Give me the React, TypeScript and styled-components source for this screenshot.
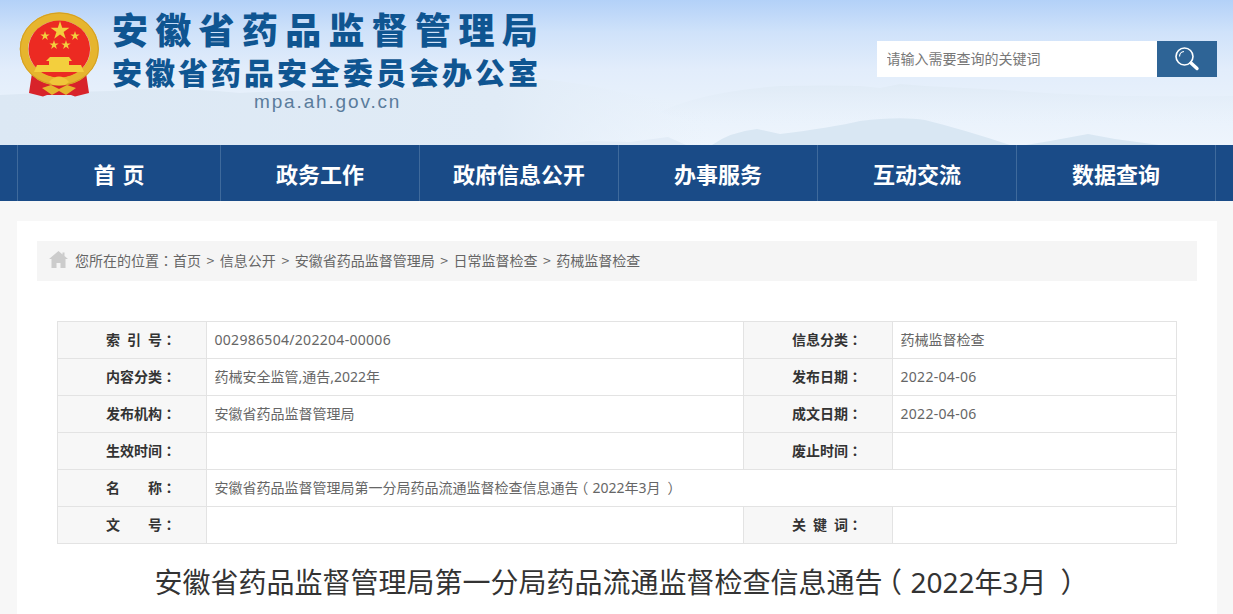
import styled, { createGlobalStyle } from "styled-components";

const GlobalStyle = createGlobalStyle`
  html, body, #root {
    margin: 0;
    padding: 0;
    height: 100%;
    overflow: hidden;
    background: #f7f7f7;
  }
  body {
    font-family: "Noto Sans", "Noto Sans CJK SC", sans-serif;
  }
`;

const Page = styled.div`
  width: 1233px;
  height: 614px;
  overflow: hidden;
`;

const Banner = styled.header`
  position: relative;
  height: 145px;
  overflow: hidden;
  background: linear-gradient(180deg, #b3d1f8 0%, #cfe2fa 22%, #e2edfb 48%, #e8f1fb 72%, #eef5fd 100%);
`;

const Scenery = styled.svg`
  position: absolute;
  left: 0;
  top: 0;
`;

const BannerRow = styled.div`
  position: relative;
  display: flex;
  justify-content: space-between;
  padding: 0 16px 0 18px;
`;

const Brand = styled.div`
  display: flex;
  gap: 13px;
  padding-top: 11px;
`;

const BrandText = styled.div`
  display: flex;
  flex-direction: column;
  margin-top: -2px;
  font-family: "Noto Sans CJK SC", sans-serif;
  font-weight: 900;
  color: #0f5591;
  white-space: nowrap;
`;

const TitleMain = styled.div`
  margin-left: -1px;
  font-size: 36px;
  line-height: 38px;
  letter-spacing: 7.3px;
`;

const TitleSub = styled.div`
  margin: 6px 0 0 -1px;
  font-size: 30px;
  line-height: 36px;
  letter-spacing: 3px;
`;

const Domain = styled.div`
  margin-top: 1px;
  padding-left: 141px;
  font-family: "Liberation Sans", sans-serif;
  font-weight: 400;
  font-size: 19px;
  line-height: 24px;
  letter-spacing: 1.85px;
  color: #5a7c9c;
`;

const Search = styled.form`
  display: flex;
  margin-top: 41px;
  width: 340px;
  height: 36px;
`;

const SearchInput = styled.input`
  flex: 1;
  min-width: 0;
  box-sizing: border-box;
  border: 0;
  outline: 0;
  padding: 0 10px 2px 9.5px;
  background: #fff;
  font: 14px "Noto Sans CJK SC", sans-serif;
  color: #333;
  &::placeholder {
    color: #777;
    opacity: 1;
  }
`;

const SearchButton = styled.button`
  display: flex;
  align-items: center;
  justify-content: center;
  width: 60px;
  border: 0;
  padding: 0;
  background: #2e6496;
`;

const Nav = styled.nav`
  height: 56px;
  background: #1a4b87;
  padding-left: 17px;
  display: flex;
`;

const NavItem = styled.a<{ $first?: boolean }>`
  box-sizing: border-box;
  width: ${(p) => (p.$first ? "203px" : "199px")};
  line-height: 56px;
  text-align: center;
  border-left: 1px solid #3f6a9c;
  color: #fff;
  font-family: "Noto Sans CJK SC", sans-serif;
  font-weight: 700;
  font-size: 22px;
  word-spacing: 2px;
  white-space: pre;
`;

const NavEnd = styled.span`
  width: 1px;
  background: #3f6a9c;
`;

const Card = styled.main`
  margin: 20px 16px 0 17px;
  padding: 20px;
  background: #fff;
`;

const Crumbs = styled.div`
  display: flex;
  align-items: center;
  gap: 7px;
  height: 40px;
  padding: 0 0 3px 12px;
  box-sizing: border-box;
  background: #f5f5f5;
  font: 14px "Noto Sans CJK SC", sans-serif;
  word-spacing: 2.4px;
  color: #666;
  white-space: pre;
`;

// fullwidth punctuation sits centred in its box in the TC cut
const Punct = styled.span`
  font-family: "Noto Sans CJK TC", sans-serif;
`;

// halt squeezes the paren to half an em, the em box then places it
const Paren = styled.span<{ $close?: boolean }>`
  display: inline-block;
  box-sizing: border-box;
  width: 1em;
  padding-left: ${(p) => (p.$close ? "0" : "0.2em")};
  text-align: ${(p) => (p.$close ? "right" : "left")};
  font-family: "Noto Sans CJK TC", sans-serif;
  font-feature-settings: "halt";
`;

const MetaTable = styled.table`
  width: 1120px;
  margin: 40px 0 0 20px;
  border-collapse: collapse;
  table-layout: fixed;
  font-family: "Noto Sans", "Noto Sans CJK SC", sans-serif;
  font-size: 14px;
`;

const Label = styled.th`
  box-sizing: border-box;
  height: 37px;
  padding: 0 0 2px 48px;
  border: 1px solid #e3e3e3;
  background: #f7f7f7;
  color: #333;
  font-weight: 700;
  text-align: left;
  white-space: pre;
`;

const Value = styled.td<{ $code?: boolean }>`
  box-sizing: border-box;
  height: 37px;
  padding: 0 0 2px 7.5px;
  border: 1px solid #e3e3e3;
  color: #666;
  letter-spacing: ${(p) => (p.$code ? "0.3px" : "0")};
  white-space: pre;
`;

const ArticleTitle = styled.h1`
  margin: 17px 5px 0 0;
  text-align: center;
  font-family: "Noto Sans", "Noto Sans CJK SC", sans-serif;
  font-weight: 400;
  font-size: 28px;
  line-height: 40px;
  color: #333;
  white-space: pre;
`;

function Emblem() {
  return (
    <svg width="82" height="86" viewBox="0 0 82 86">
      <path d="M14 62 L11 82 L25 85.5 L29 84 H53 L57 85.5 L71 82 L68 62 Z" fill="#d8232a" />
      <ellipse cx="41.3" cy="38" rx="35.3" ry="32.5" fill="none" stroke="#e6b52e" strokeWidth="8.5" />
      <ellipse cx="41.3" cy="38" rx="39" ry="36" fill="none" stroke="#d49f22" strokeWidth="1" />
      <ellipse cx="41.3" cy="38" rx="30.8" ry="28.5" fill="#ec2a22" />
      <g fill="#f3cf3d">
        <polygon points="42,10 44.2,16.8 51.4,16.8 45.6,21 47.8,27.8 42,23.6 36.2,27.8 38.4,21 32.6,16.8 39.8,16.8" />
        <polygon points="27,20 28.1,23.4 31.7,23.4 28.8,25.5 29.9,28.9 27,26.8 24.1,28.9 25.2,25.5 22.3,23.4 25.9,23.4" />
        <polygon points="57,20 58.1,23.4 61.7,23.4 58.8,25.5 59.9,28.9 57,26.8 54.1,28.9 55.2,25.5 52.3,23.4 55.9,23.4" />
        <polygon points="36,29 37.1,32.4 40.7,32.4 37.8,34.5 38.9,37.9 36,35.8 33.1,37.9 34.2,34.5 31.3,32.4 34.9,32.4" />
        <polygon points="48,29 49.1,32.4 52.7,32.4 49.8,34.5 50.9,37.9 48,35.8 45.1,37.9 46.2,34.5 43.3,32.4 46.9,32.4" />
        <path d="M32 46 H51 L54 50 H51 V54 H63 L66 61 H16 L19 54 H31 V50 H28 Z" />
      </g>
      <path d="M31 71 Q41 60 51 71 L47 74 H35 Z" fill="#f0c63a" />
      <path d="M24 77 L33 74 L41 78 L49 74 L58 77 L48 84 L41 80 L34 84 Z" fill="#e6b52e" />
    </svg>
  );
}

const rows: [string, string, string, string][] = [
  ["索\u2002引\u2002号", "002986504/202204-00006", "信息分类", "药械监督检查"],
  ["内容分类", "药械安全监管,通告,2022年", "发布日期", "2022-04-06"],
  ["发布机构", "安徽省药品监督管理局", "成文日期", "2022-04-06"],
  ["生效时间", "", "废止时间", ""],
];

const isCode = (s: string) => /^[\d/-]+$/.test(s);

export default function App() {
  return (
    <Page>
      <GlobalStyle />
      <Banner>
        <Scenery width="1233" height="145" viewBox="0 0 1233 145">
          <defs>
            <linearGradient id="haze" x1="0" x2="1" y1="0" y2="0">
              <stop offset="0" stopColor="#dce8f4" />
              <stop offset="0.7" stopColor="#e0ebf6" />
              <stop offset="1" stopColor="#e8f1fb" stopOpacity="0" />
            </linearGradient>
            <linearGradient id="ridge" x1="0" x2="0" y1="0" y2="1">
              <stop offset="0" stopColor="#e0ebf6" />
              <stop offset="1" stopColor="#e8f1fb" stopOpacity="0" />
            </linearGradient>
          </defs>
          <path d="M0 95 Q50 92 110 91 Q170 86 240 93 Q300 90 400 89 Q470 80 540 79 Q590 84 620 92 Q660 100 710 102 V145 H0 Z" fill="url(#haze)" />
          <path d="M660 112 Q700 92 780 86 Q830 85 860 86 L880 88 L900 84 L925 86 L1004 90 Q1100 98 1233 96 V125 H700 Z" fill="url(#ridge)" />
          <path d="M549 145 L590 141 L630 142 L668 137 L686 145 Z" fill="#e2ecf7" />
          <path d="M712 145 Q730 132 757 129 L780 134 Q830 128 860 121 Q900 116 925 120 Q965 130 1010 145 Z" fill="#d9e7f3" />
          <path d="M1026 145 L1050 141 L1088 134 L1115 139 L1159 145 Z" fill="#d9e7f3" />
        </Scenery>
        <BannerRow>
          <Brand>
            <Emblem />
            <BrandText>
              <TitleMain>安徽省药品监督管理局</TitleMain>
              <TitleSub>安徽省药品安全委员会办公室</TitleSub>
              <Domain>mpa.ah.gov.cn</Domain>
            </BrandText>
          </Brand>
          <Search onSubmit={(e) => e.preventDefault()}>
            <SearchInput placeholder="请输入需要查询的关键词" />
            <SearchButton type="button" aria-label="搜索">
              <svg width="26" height="26" viewBox="0 0 26 26" fill="none">
                <circle cx="10.5" cy="10.5" r="8.5" stroke="#fff" strokeWidth="1.6" />
                <path d="M5.5 10.5 A5 5 0 0 1 10 5.5" stroke="#fff" strokeWidth="1.2" />
                <path d="M17 17 L23 22.5" stroke="#fff" strokeWidth="3.4" strokeLinecap="round" />
              </svg>
            </SearchButton>
          </Search>
        </BannerRow>
      </Banner>
      <Nav>
        <NavItem $first>首 页</NavItem>
        <NavItem>政务工作</NavItem>
        <NavItem>政府信息公开</NavItem>
        <NavItem>办事服务</NavItem>
        <NavItem>互动交流</NavItem>
        <NavItem>数据查询</NavItem>
        <NavEnd />
      </Nav>
      <Card>
        <Crumbs>
          <svg width="19" height="17" viewBox="0 0 19 17" fill="#ccc">
            <path d="M9.5 0 L13.5 3.4 L13.5 1.5 L15.5 1.5 L15.5 5.1 L19 8 L16.5 8 L16.5 17 L11.5 17 L11.5 12 L7.5 12 L7.5 17 L2.5 17 L2.5 8 L0 8 Z" />
          </svg>
          <span>
            您所在的位置<Punct>：</Punct>首页 &gt; 信息公开 &gt; 安徽省药品监督管理局 &gt; 日常监督检查 &gt; 药械监督检查
          </span>
        </Crumbs>
        <MetaTable>
          <colgroup>
            <col style={{ width: 149 }} />
            <col style={{ width: 537 }} />
            <col style={{ width: 149 }} />
            <col />
          </colgroup>
          <tbody>
            {rows.map((r) => (
              <tr key={r[0]}>
                <Label>
                  {r[0]}
                  <Punct>：</Punct>
                </Label>
                <Value $code={isCode(r[1])}>{r[1]}</Value>
                <Label>
                  {r[2]}
                  <Punct>：</Punct>
                </Label>
                <Value $code={isCode(r[3])}>{r[3]}</Value>
              </tr>
            ))}
            <tr>
              <Label>
                {"名\u3000\u3000称"}
                <Punct>：</Punct>
              </Label>
              <Value colSpan={3}>
                安徽省药品监督管理局第一分局药品流通监督检查信息通告<Paren>（</Paren>2022年3月<Paren $close>）</Paren>
              </Value>
            </tr>
            <tr>
              <Label>
                {"文\u3000\u3000号"}
                <Punct>：</Punct>
              </Label>
              <Value />
              <Label>
                {"关\u2002键\u2002词"}
                <Punct>：</Punct>
              </Label>
              <Value />
            </tr>
          </tbody>
        </MetaTable>
        <ArticleTitle>
          安徽省药品监督管理局第一分局药品流通监督检查信息通告<Paren>（</Paren>2022年3月<Paren $close>）</Paren>
        </ArticleTitle>
      </Card>
    </Page>
  );
}
